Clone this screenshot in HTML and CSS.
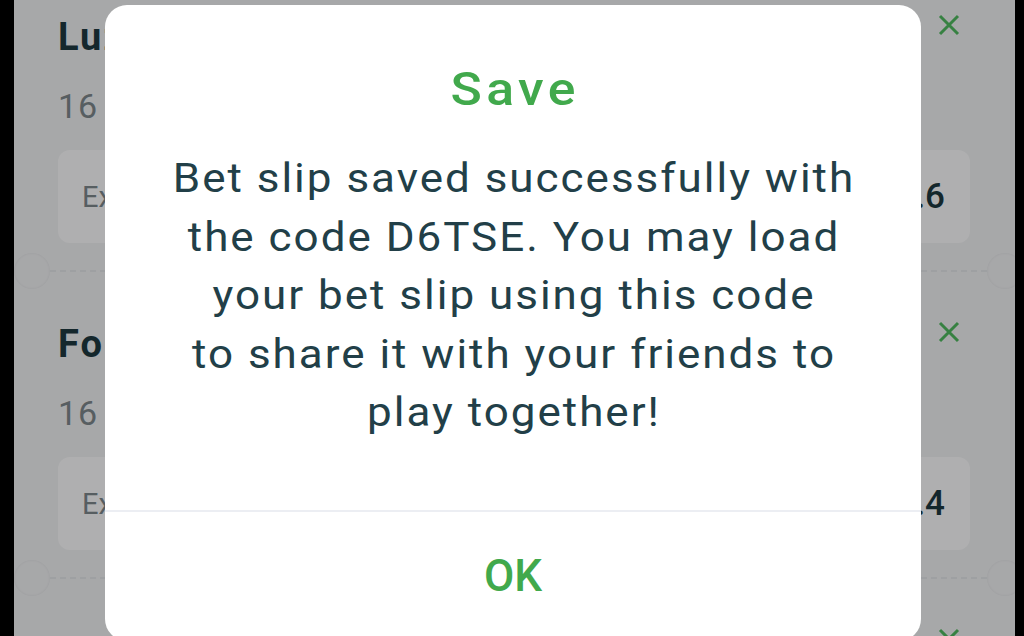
FILE: index.html
```html
<!doctype html>
<html>
  <head>
    <link rel="stylesheet" href="styles.css">
  </head>
  <body>
    <div class="screen">
      <div class="slip-list">
        <div class="slip-item">
          <div class="item-head">
            <div class="item-title">Luzern - Basel</div>
            <svg class="item-remove" viewBox="0 0 22 22"><path d="M2 2L20 20M20 2L2 20"/></svg>
          </div>
          <div class="item-date">16 Oct 19:30</div>
          <div class="item-card">
            <span class="market">Exact score 2:1</span>
            <span class="odds">4.6</span>
          </div>
          <div class="item-divider"><span class="notch left"></span><span class="dash"></span><span class="notch right"></span></div>
        </div>
        <div class="slip-item">
          <div class="item-head">
            <div class="item-title">Fo: Bochum</div>
            <svg class="item-remove" viewBox="0 0 22 22"><path d="M2 2L20 20M20 2L2 20"/></svg>
          </div>
          <div class="item-date">16 Oct 20:45</div>
          <div class="item-card">
            <span class="market">Exact score 1:1</span>
            <span class="odds">5.4</span>
          </div>
          <div class="item-divider"><span class="notch left"></span><span class="dash"></span><span class="notch right"></span></div>
        </div>
        <div class="slip-item">
          <div class="item-head">
            <div class="item-title">Mainz - Hertha</div>
            <svg class="item-remove" viewBox="0 0 22 22"><path d="M2 2L20 20M20 2L2 20"/></svg>
          </div>
        </div>
      </div>

      <div class="scrim"></div>

      <div class="dialog">
        <div class="dialog-title">Save</div>
        <div class="dialog-text">
          Bet slip saved successfully with<br>
          the code D6TSE. You may load<br>
          your bet slip using this code<br>
          to share it with your friends to<br>
          play together!
        </div>
        <div class="dialog-footer">
          <div class="dialog-btn">OK</div>
        </div>
      </div>
    </div>
  </body>
</html>
```

FILE: styles.css
```css
html, body {
  margin: 0;
  padding: 0;
  height: 100%;
  background: #000;
  overflow: hidden;
}

.screen {
  position: relative;
  margin: 0 9px 0 14px;
  height: 636px;
  overflow: hidden;
  background: #f0f1f3;
  font-family: Roboto, "Noto Sans", sans-serif;
}

.slip-list {
  padding-top: 12px;
}

.slip-item {
  padding: 0 45px 32px 44px;
}

.item-head {
  display: flex;
  justify-content: space-between;
  height: 50px;
}

.item-title {
  font-size: 38px;
  font-weight: 700;
  line-height: 50px;
  letter-spacing: 2px;
  color: #1d3840;
}

.item-remove {
  width: 22px;
  height: 22px;
  margin: 2px 10px 0 0;
  fill: none;
  stroke: #50b95f;
  stroke-width: 3;
}

.item-date {
  margin-top: 24px;
  font-size: 34px;
  line-height: 40px;
  letter-spacing: 1px;
  color: #7d878c;
}

.item-card {
  display: flex;
  justify-content: space-between;
  align-items: center;
  margin-top: 24px;
  height: 93px;
  padding: 0 25px 0 24px;
  border-radius: 12px;
  background: #fbfbfc;
}

.market {
  font-size: 29px;
  color: #7d878c;
}

.odds {
  font-size: 35px;
  font-weight: 500;
  color: #1d3840;
}

.item-divider {
  display: flex;
  align-items: center;
  margin: 12px -35px 0 -26px;
  height: 32px;
}

.notch {
  width: 36px;
  height: 36px;
  border-radius: 50%;
  background: #f0f1f3;
  box-shadow: inset 0 0 3px rgba(0, 0, 0, .08);
  flex: none;
}

.notch.left {
  margin-left: -18px;
}

.notch.right {
  margin-right: -18px;
}

.dash {
  flex: 1;
  border-top: 2px dashed #e3e5e8;
}

.scrim {
  position: absolute;
  top: 0;
  left: 0;
  right: 0;
  bottom: 0;
  background: rgba(0, 0, 0, .3);
}

.dialog {
  position: absolute;
  top: 5px;
  left: 91px;
  width: 816px;
  height: 636px;
  display: flex;
  flex-direction: column;
  background: #fff;
  border-radius: 22px;
  text-align: center;
}

/* the source screen is a little stretched sideways */
.dialog-title,
.dialog-text {
  transform: scaleX(1.1);
}

.dialog-title {
  margin-top: 56px;
  padding-left: 4px;
  font-size: 47px;
  font-weight: 500;
  line-height: 56px;
  letter-spacing: 4px;
  color: #41a94c;
}

.dialog-text {
  margin-top: 33px;
  padding-left: 1.8px;
  font-size: 40px;
  line-height: 58.6px;
  letter-spacing: 1.8px;
  color: #223f48;
}

.dialog-footer {
  margin-top: 67px;
  border-top: 2px solid #eceef3;
  height: 128px;
  display: flex;
  align-items: center;
  justify-content: center;
}

.dialog-btn {
  font-size: 44px;
  font-weight: 500;
  color: #41a94c;
}
```
